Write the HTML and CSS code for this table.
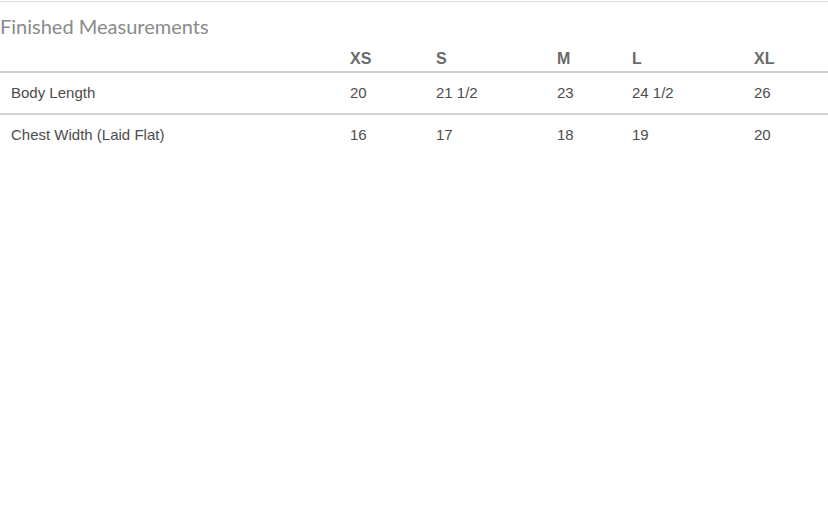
FILE: index.html
```html
<!DOCTYPE html>
<html>
<head>
<meta charset="utf-8">
<link rel="stylesheet" href="styles.css">
</head>
<body>
<div class="sizes">
  <h2 class="title">Finished Measurements</h2>
  <table class="chart">
    <colgroup>
      <col class="c-label"><col class="c-xs"><col class="c-s"><col class="c-m"><col class="c-l"><col class="c-xl">
    </colgroup>
    <thead>
      <tr><th></th><th>XS</th><th>S</th><th>M</th><th>L</th><th>XL</th></tr>
    </thead>
    <tbody>
      <tr><td>Body Length</td><td>20</td><td>21 1/2</td><td>23</td><td>24 1/2</td><td>26</td></tr>
      <tr><td>Chest Width (Laid Flat)</td><td>16</td><td>17</td><td>18</td><td>19</td><td>20</td></tr>
    </tbody>
  </table>
</div>
</body>
</html>
```

FILE: styles.css
```css
html, body {
  margin: 0;
  padding: 0;
  background: #fff;
}
.sizes {
  padding-top: 1px;
}
.title {
  margin: 0 0 0 0;
  border-top: 1px solid #dcdcdc;
  font-family: Lato, "Open Sans", sans-serif;
  font-weight: normal;
  font-size: 20px;
  line-height: 24px;
  color: #8a8a8a;
  padding: 12px 0 0 0;
}
.chart {
  width: 828px;
  border-collapse: collapse;
  table-layout: fixed;
  font-family: "Liberation Sans", Arial, sans-serif;
}
.c-label { width: 340px; }
.c-xs { width: 86px; }
.c-s { width: 121px; }
.c-m { width: 75px; }
.c-l { width: 122px; }
.c-xl { width: 84px; }
th, td {
  text-align: left;
  padding: 0 10px;
}
th:first-child, td:first-child {
  padding-left: 11px;
}
th {
  font-size: 16px;
  line-height: 18px;
  font-weight: bold;
  color: #6a6a6a;
  height: 30px;
  vertical-align: bottom;
  padding-bottom: 3px;
  border-bottom: 2px solid #d2d2d2;
}
td {
  font-size: 15px;
  color: #4d4d4d;
  height: 38px;
  padding-bottom: 2px;
}
tbody tr:first-child td {
  border-bottom: 2px solid #d2d2d2;
}
```
